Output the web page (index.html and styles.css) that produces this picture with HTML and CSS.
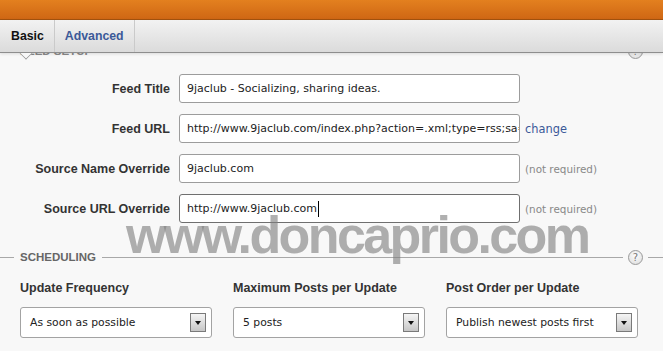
FILE: index.html
```html
<!DOCTYPE html>
<html lang="en">
<head>
    <meta charset="UTF-8">
    <title>Feed Settings</title>
    <link rel="stylesheet" href="styles.css">
</head>
<body>
    <div class="topbar"></div>
    <nav class="tabs">
        <a class="tab active" href="#">Basic</a>
        <a class="tab" href="#">Advanced</a>
    </nav>

    <main class="content">
        <section class="group">
            <div class="group-head feed-head">
                <span class="group-title">FEED SETUP</span>
                <span class="group-line"></span>
                <span class="help">?</span>
            </div>
            <div class="form-grid">
                <label class="form-label">Feed Title</label>
                <div class="input">9jaclub - Socializing, sharing ideas.</div>
                <span></span>

                <label class="form-label">Feed URL</label>
                <div class="input">http://www.9jaclub.com/index.php?action=.xml;type=rss;sa=</div>
                <a class="change" href="#">change</a>

                <label class="form-label">Source Name Override</label>
                <div class="input">9jaclub.com</div>
                <span class="hint">(not required)</span>

                <label class="form-label">Source URL Override</label>
                <div class="input focused">http://www.9jaclub.com<span class="caret"></span></div>
                <span class="hint">(not required)</span>
            </div>
        </section>

        <section class="group">
            <div class="group-head sched-head">
                <span class="group-title">SCHEDULING</span>
                <span class="group-line"></span>
                <span class="help">?</span>
            </div>
            <div class="sched-grid">
                <div class="sched-field">
                    <div class="sched-label">Update Frequency</div>
                    <div class="select">As soon as possible<span class="select-btn"></span></div>
                </div>
                <div class="sched-field">
                    <div class="sched-label">Maximum Posts per Update</div>
                    <div class="select">5 posts<span class="select-btn"></span></div>
                </div>
                <div class="sched-field">
                    <div class="sched-label">Post Order per Update</div>
                    <div class="select">Publish newest posts first<span class="select-btn"></span></div>
                </div>
            </div>
        </section>

        <div class="watermark">www.doncaprio.com</div>
    </main>
</body>
</html>
```

FILE: styles.css
```css
body, html {
    height: 100%;
    margin: 0;
    padding: 0;
    overflow: hidden;
    background-color: #f8f8f8;
    font-family: "Liberation Sans", Arial, sans-serif;
    color: #333;
}
.topbar {
    height: 19px;
    background: linear-gradient(#e3801f, #cf6714);
    border-bottom: 1px solid #a4530f;
}
.tabs {
    position: relative;
    z-index: 2;
    display: flex;
    height: 32px;
    background: linear-gradient(#f2f2f2, #dbdbdb);
    border-bottom: 1px solid #8e8e8e;
    box-shadow: 0 1px 3px rgba(0, 0, 0, 0.12);
}
.tab {
    position: relative;
    display: flex;
    align-items: center;
    padding: 0 10px 0 11px;
    border-right: 1px solid #cacaca;
    font-size: 12.3px;
    font-weight: bold;
    color: #3b5998;
    text-decoration: none;
}
.tab + .tab {
    padding-left: 10px;
}
.tab.active {
    color: #111;
}
/* little pointer under the active tab */
.tab.active::after {
    content: "";
    position: absolute;
    left: 21px;
    bottom: -6px;
    width: 9px;
    height: 9px;
    background-color: #f8f8f8;
    border-right: 1px solid #999;
    border-bottom: 1px solid #999;
    transform: rotate(45deg);
    clip-path: polygon(100% 0, 100% 100%, 0 100%);
}
.content {
    position: relative;
}
.group-head {
    display: flex;
    align-items: center;
    height: 14px;
    font-size: 11.5px;
    font-weight: bold;
    color: #666;
}
.group-head::before {
    content: "";
    width: 14px;
    border-top: 1px solid #a8a8a8;
}
.group-head::after {
    content: "";
    width: 15px;
    border-top: 1px solid #a8a8a8;
}
.group-title {
    padding: 0 6px;
}
.group-line {
    flex: 1;
    border-top: 1px solid #a8a8a8;
}
.help {
    display: flex;
    align-items: center;
    justify-content: center;
    width: 13px;
    height: 13px;
    margin: 0 5px;
    border: 1px solid #999;
    border-radius: 50%;
    background: radial-gradient(circle at 50% 35%, #fdfdfd, #dcdcdc);
    font-family: "DejaVu Sans", sans-serif;
    font-size: 10px;
    font-weight: normal;
    color: #777;
}
.feed-head {
    margin-top: -9px;
    color: #888;
}
.form-grid {
    display: grid;
    grid-template-columns: 170px 341px auto;
    column-gap: 9px;
    row-gap: 11px;
    align-items: center;
    margin-top: 16px;
}
.form-label {
    text-align: right;
    font-size: 12.5px;
    font-weight: bold;
    color: #333;
}
.input {
    height: 27px;
    line-height: 27px;
    padding: 0 7px;
    background-color: #fff;
    border: 1px solid #9c9c9c;
    border-radius: 3px;
    overflow: hidden;
    white-space: nowrap;
    font-family: "DejaVu Sans", sans-serif;
    font-size: 11px;
    color: #222;
}
.input.focused {
    border-color: #6f6f6f;
}
.caret {
    display: inline-block;
    width: 1px;
    height: 16px;
    margin-left: 1px;
    vertical-align: middle;
    background-color: #000;
}
.change {
    margin-left: -4px;
    font-family: "DejaVu Sans", sans-serif;
    font-size: 11.4px;
    color: #3b5998;
    text-decoration: none;
}
.hint {
    margin-left: -4px;
    font-family: "DejaVu Sans", sans-serif;
    font-size: 10.4px;
    color: #888;
}
.sched-head {
    margin-top: 27px;
}
.sched-grid {
    display: grid;
    grid-template-columns: repeat(3, 192px);
    column-gap: 21px;
    padding: 0 20px;
    margin-top: 16px;
}
.sched-label {
    height: 16px;
    line-height: 16px;
    margin-bottom: 11px;
    font-size: 12.5px;
    font-weight: bold;
    color: #333;
}
.select {
    display: flex;
    align-items: center;
    justify-content: space-between;
    height: 29px;
    padding: 0 5px 0 9px;
    background-color: #fff;
    border: 1px solid #a3a3a3;
    border-radius: 3px;
    font-family: "DejaVu Sans", sans-serif;
    font-size: 10.8px;
    color: #222;
}
.select-btn {
    display: flex;
    align-items: center;
    justify-content: center;
    width: 14px;
    height: 17px;
    border: 1px solid #7a7a7a;
    background: linear-gradient(#f5f5f5, #c6c6c6);
}
.select-btn::before {
    content: "";
    border-left: 3.5px solid transparent;
    border-right: 3.5px solid transparent;
    border-top: 4px solid #111;
}
.watermark {
    position: absolute;
    left: 126px;
    top: 165px;
    font-size: 52px;
    line-height: 1;
    font-weight: bold;
    letter-spacing: -2.6px;
    color: rgba(128, 128, 128, 0.62);
    white-space: nowrap;
    pointer-events: none;
}
```
